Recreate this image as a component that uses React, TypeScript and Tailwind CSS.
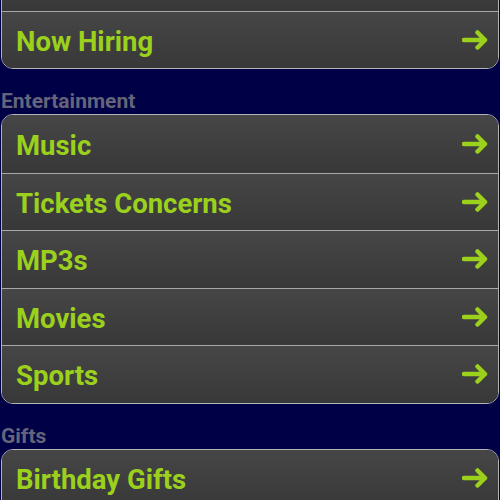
import React from 'react';

interface Section {
  title?: string;
  items: string[];
}

const sections: Section[] = [
  { items: ['Jobs', 'Now Hiring'] },
  { title: 'Entertainment', items: ['Music', 'Tickets Concerns', 'MP3s', 'Movies', 'Sports'] },
  { title: 'Gifts', items: ['Birthday Gifts', 'Gift Cards'] },
];

function Arrow() {
  return (
    <svg width="28" height="22" viewBox="0 0 28 22" className="shrink-0">
      <path
        d="M2 11 H23 M15.5 3.5 L23 11 L15.5 18.5"
        fill="none"
        stroke="#9bd11c"
        strokeWidth="4.5"
        strokeLinecap="round"
        strokeLinejoin="round"
      />
    </svg>
  );
}

export default function App() {
  return (
    <div
      className="w-[500px] h-[500px] overflow-hidden bg-[#000046]"
      style={{ fontFamily: 'Roboto, "Liberation Sans", sans-serif' }}
    >
      <div className="-mt-[48px]">
        {sections.map((section, si) => (
          <div key={si}>
            {section.title && (
              <div className="h-[45px] flex items-end pl-[1px] text-[21px] font-bold text-[#64647a] leading-none">
                <span className="mb-[2px]">{section.title}</span>
              </div>
            )}
            <div className="mx-[1px] border-[1.5px] border-[#b4b4b4] rounded-[12px] overflow-hidden">
              {section.items.map((item, i) => (
                <div
                  key={item}
                  className={`h-[57.5px] flex items-center justify-between pl-[14px] pr-[8px] bg-gradient-to-b from-[#464646] to-[#383838] ${
                    i > 0 ? 'border-t-[1.5px] border-[#a8a8a8]' : ''
                  }`}
                >
                  <span className="mt-[3px] text-[27.5px] font-bold text-[#9bd11c] leading-none">{item}</span>
                  <Arrow />
                </div>
              ))}
            </div>
          </div>
        ))}
      </div>
    </div>
  );
}
